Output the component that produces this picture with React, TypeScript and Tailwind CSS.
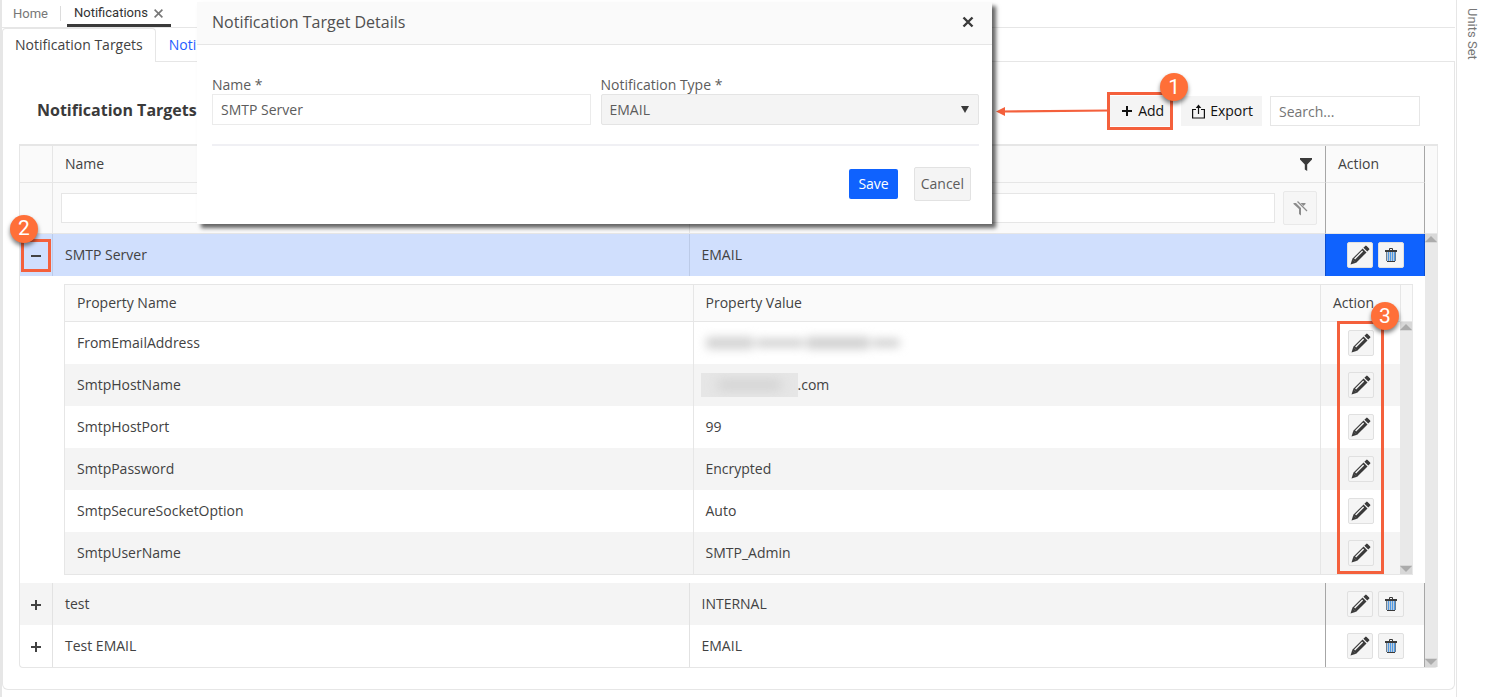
import React from "react";

type Target = { name: string; type: string };
type Property = { name: string; value: React.ReactNode };

const Redacted = () => (
  <span className="flex w-[196px] items-center gap-0.5 blur-[5px]">
    <span className="h-3 w-12 rounded bg-[#d2d2d2]" />
    <span className="h-2 w-12 rounded bg-[#cccccc]" />
    <span className="h-3 w-16 rounded bg-[#cfcfcf]" />
    <span className="h-2 w-7 rounded bg-[#cccccc]" />
  </span>
);

const RedactedHost = () => (
  <span className="-ml-[5px] flex items-center">
    <span className="flex h-6 w-[97px] items-center overflow-hidden bg-[#e6e6e6] px-4">
      <span className="h-2 w-full rounded bg-[#cccccc] blur-[6px]" />
    </span>
    .com
  </span>
);

const properties: Property[] = [
  { name: "FromEmailAddress", value: <Redacted /> },
  { name: "SmtpHostName", value: <RedactedHost /> },
  { name: "SmtpHostPort", value: "99" },
  { name: "SmtpPassword", value: "Encrypted" },
  { name: "SmtpSecureSocketOption", value: "Auto" },
  { name: "SmtpUserName", value: "SMTP_Admin" },
];

const otherTargets: Target[] = [
  { name: "test", type: "INTERNAL" },
  { name: "Test EMAIL", type: "EMAIL" },
];

const PencilIcon = () => (
  <svg width="20" height="20" viewBox="0 0 20 20" fill="#3a3a3a">
    <path d="M13.4 2.700 15.200.9q.7-.7 1.400 0l2.500 2.500q.7.700 0 1.400l-1.800 1.800z" />
    <path d="M12.600 3.500 16.500 7.400 6.200 17.700 .5 19.500 2.300 13.800z" />
    <path d="M12.600 6 4.600 14" stroke="#f4f4f4" strokeWidth="1.400" />
    <path d="M2.300 14.200 5.800 17.700" stroke="#777" strokeWidth=".5" />
  </svg>
);

const TrashIcon = () => (
  <svg width="12" height="14" viewBox="0 0 12 14" fill="none">
    <path d="M4.500 2V.5h3V2" stroke="#3a3a3a" />
    <path d="M0 2h12v2H0z" fill="#3a3a3a" />
    <path d="M1.500 4h9v9h-9z" fill="#c3cdd6" />
    <path d="M3.500 4v9M5.500 4v9M7.500 4v9M9.500 4v9" stroke="#4f9ae6" />
    <path d="M1.500 4v9M10.500 4v9" stroke="#6b7f92" />
    <path d="M2 13.500h8" stroke="#3a3a3a" />
  </svg>
);

const PlusIcon = () => (
  <svg width="10" height="10" viewBox="0 0 10 10" fill="currentColor">
    <path d="M4 0h2v4h4v2H6v4H4V6H0V4h4z" />
  </svg>
);

const MinusIcon = () => (
  <svg width="10" height="10" viewBox="0 0 10 10" fill="currentColor">
    <path d="M0 4h10v2H0z" />
  </svg>
);

const ExportIcon = () => (
  <svg width="13" height="15" viewBox="0 0 13 15" fill="none" stroke="#111" strokeWidth="1.200">
    <path d="M4 5.500H.6v8.500h11.800V5.500H9" />
    <path d="M6.500 10V2" />
    <path d="M6.500 .5 9.300 4H3.700z" fill="#111" stroke="none" />
  </svg>
);

const FunnelIcon = () => (
  <svg width="12" height="13" viewBox="0 0 12 13" fill="#3a3a3a">
    <path d="M0 0h12v1.500L7.200 6.500V13L4.800 11.500v-5L0 1.500z" />
  </svg>
);

const FunnelClearIcon = () => (
  <svg width="15" height="15" viewBox="0 0 15 15" fill="none">
    <path d="M.5 2H3l5 5v7.500L6 13V8L.5 3z" fill="#8c8c8c" />
    <path d="M7.500 2h5v1L10.500 5z" fill="#8c8c8c" />
    <path d="M4.500.5 14 10" stroke="#8c8c8c" strokeWidth="1.200" />
  </svg>
);

const ArrowUp = () => (
  <svg className="block" width="12" height="9" viewBox="0 0 12 9">
    <rect width="12" height="9" fill="#d8d8d8" />
    <path d="M0 8 6 2l6 6z" fill="#ababab" />
  </svg>
);

const ArrowDown = () => (
  <svg className="block" width="12" height="9" viewBox="0 0 12 9">
    <rect width="12" height="9" fill="#d8d8d8" />
    <path d="M0 1 6 7l6-6z" fill="#ababab" />
  </svg>
);

const IconButton = ({ label, children }: { label: string; children: React.ReactNode }) => (
  <button
    type="button"
    aria-label={label}
    className="flex size-[26px] items-center justify-center rounded-xs border border-[#e0e0e0] bg-[#f5f5f5]"
  >
    {children}
  </button>
);

const Badge = ({ n, className }: { n: number; className: string }) => (
  <span
    className={
      "absolute z-30 flex size-7 items-center justify-center rounded-full bg-[#ff6f38] font-[Roboto,sans-serif] text-[21px] leading-none text-white shadow-[0_3px_4px_rgba(0,0,0,0.5)] " +
      className
    }
  >
    {n}
  </span>
);

const Gutter = ({ headClass }: { headClass: string }) => (
  <div className="flex w-[13px] shrink-0 flex-col border-r border-[#e8e8e8] bg-[#e9e9e9]">
    <div className={"border-b border-[#e6e6e6] bg-[#fafafa] " + headClass} />
    <ArrowUp />
    <div className="flex-1" />
    <ArrowDown />
  </div>
);

const PropertyGrid = () => (
  <div className="relative flex border border-r-0 border-[#e6e6e6]">
    <table className="w-full flex-1 table-fixed border-separate border-spacing-0 text-left">
      <colgroup>
        <col />
        <col />
        <col className="w-20" />
      </colgroup>
      <thead className="bg-[#fafafa]">
        <tr>
          <th className="h-[37px] border-b border-[#e6e6e6] px-3 font-normal">Property Name</th>
          <th className="border-b border-l border-[#e6e6e6] px-3 font-normal">Property Value</th>
          <th className="border-b border-l border-[#e6e6e6] px-3 font-normal">Action</th>
        </tr>
      </thead>
      <tbody>
        {properties.map((p) => (
          <tr key={p.name} className="even:bg-[#f4f4f4]">
            <td className="h-[42px] px-3">{p.name}</td>
            <td className="border-l border-[#e6e6e6] px-3">{p.value}</td>
            <td className="border-l border-[#e6e6e6]">
              <div className="flex justify-center">
                <IconButton label={"Edit " + p.name}>
                  <PencilIcon />
                </IconButton>
              </div>
            </td>
          </tr>
        ))}
      </tbody>
    </table>
    <Gutter headClass="h-[37px] border-l" />
    <div className="pointer-events-none absolute top-9 right-[29px] bottom-0 w-[47px] border-3 border-[#f4603c]">
      <Badge n={3} className="-top-[22px] -right-[18px]" />
    </div>
  </div>
);

const TargetActions = ({ name }: { name: string }) => (
  <div className="flex justify-center gap-[5px]">
    <IconButton label={"Edit " + name}>
      <PencilIcon />
    </IconButton>
    <IconButton label={"Delete " + name}>
      <TrashIcon />
    </IconButton>
  </div>
);

const TargetGrid = () => (
  <div className="flex rounded-b-sm border border-t-2 border-r-0 border-[#e6e6e6]">
    <table className="w-full flex-1 table-fixed border-separate border-spacing-0 text-left">
      <colgroup>
        <col className="w-8" />
        <col />
        <col />
        <col className="w-[100px]" />
      </colgroup>
      <thead className="bg-[#fafafa]">
        <tr>
          <th className="h-[37px] border-b border-[#e6e6e6]" />
          <th className="border-b border-l border-[#e6e6e6] px-3 font-normal">Name</th>
          <th className="border-b border-l border-[#e6e6e6] px-[13px] font-normal">
            <button type="button" aria-label="Filter" className="ml-auto block">
              <FunnelIcon />
            </button>
          </th>
          <th className="border-x border-b border-x-[#a6a6a6] border-b-[#e6e6e6] px-3 font-normal">Action</th>
        </tr>
        <tr>
          <td className="h-[51px] border-b border-[#e6e6e6]" />
          <td className="border-b border-l border-[#e6e6e6] px-2">
            <input aria-label="Filter by name" className="block h-[30px] w-full border border-[#e6e6e6] bg-white px-2" />
          </td>
          <td className="border-b border-l border-[#e6e6e6] px-2">
            <div className="flex items-center gap-2">
              <input aria-label="Filter by type" className="h-[30px] min-w-0 flex-1 border border-[#e6e6e6] bg-white px-2" />
              <button
                type="button"
                aria-label="Clear filter"
                className="flex size-[34px] items-center justify-center rounded-xs border border-[#e9e9e9] bg-[#f6f6f6]"
              >
                <FunnelClearIcon />
              </button>
            </div>
          </td>
          <td className="border-x border-b border-x-[#a6a6a6] border-b-[#e6e6e6]" />
        </tr>
      </thead>
      <tbody>
        <tr className="bg-[#d0dffd]">
          <td className="h-[42px]">
            <div className="relative flex justify-center">
              <button type="button" aria-label="Collapse SMTP Server" className="pt-[9px] pb-2">
                <MinusIcon />
              </button>
              <div className="pointer-events-none absolute -top-[3px] left-px h-[33px] w-[30px] border-3 border-[#f4603c]">
                <Badge n={2} className="-top-[27px] -left-[14px]" />
              </div>
            </div>
          </td>
          <td className="border-l border-[#bccbe8] px-3">SMTP Server</td>
          <td className="border-l border-[#bccbe8] px-3">EMAIL</td>
          <td className="border-x border-[#0b4ed0] bg-[#0f62fe]">
            <TargetActions name="SMTP Server" />
          </td>
        </tr>
        <tr>
          <td colSpan={4} className="py-2 pr-3 pl-11">
            <PropertyGrid />
          </td>
        </tr>
        {otherTargets.map((t) => (
          <tr key={t.name} className="odd:bg-[#f4f4f4]">
            <td className="h-[42px]">
              <button type="button" aria-label={"Expand " + t.name} className="mx-auto block pt-0.5">
                <PlusIcon />
              </button>
            </td>
            <td className="border-l border-[#e2e2e2] px-3">{t.name}</td>
            <td className="border-l border-[#e2e2e2] px-3">{t.type}</td>
            <td className="border-x border-[#a6a6a6]">
              <TargetActions name={t.name} />
            </td>
          </tr>
        ))}
      </tbody>
    </table>
    <Gutter headClass="h-[88px]" />
  </div>
);

const DetailsDialog = () => (
  <section
    role="dialog"
    aria-labelledby="dialog-title"
    className="absolute top-0.5 left-[197px] z-20 w-[795px] bg-white text-[#5c5c5c] shadow-[4px_4px_4px_rgba(0,0,0,0.6)]"
  >
    <header className="flex h-[43px] items-center justify-between border-b border-[#e6e6e6] bg-[#fafafa] pr-[18px] pb-0.5 pl-[15px]">
      <h2 id="dialog-title" className="text-base text-[#505050]">
        Notification Target Details
      </h2>
      <button type="button" aria-label="Close">
        <svg className="block" width="12" height="12" viewBox="0 0 12 12" stroke="#3a3a3a" strokeWidth="2.400">
          <path d="M1.500 1.500l9 9M10.500 1.500l-9 9" />
        </svg>
      </button>
    </header>
    <form className="pt-[31px] pr-[13px] pl-[15px]" onSubmit={(e) => e.preventDefault()}>
      <div className="grid grid-cols-2 gap-[10px]">
        <div>
          <label htmlFor="target-name" className="block leading-[18px]">
            Name *
          </label>
          <input
            id="target-name"
            defaultValue="SMTP Server"
            className="block h-[31px] w-full border border-[#ebebeb] bg-white px-2"
          />
        </div>
        <div>
          <label htmlFor="target-type" className="block leading-[18px]">
            Notification Type *
          </label>
          <div className="relative">
            <select
              id="target-type"
              defaultValue="EMAIL"
              className="block h-[31px] w-full appearance-none rounded-xs border border-[#e4e4e4] bg-[#f4f4f4] px-2"
            >
              <option>EMAIL</option>
            </select>
            <svg className="pointer-events-none absolute top-3 right-[10px]" width="8" height="7" viewBox="0 0 8 7">
              <path d="M0 0h8L4 7z" fill="#3a3a3a" />
            </svg>
          </div>
        </div>
      </div>
      <div className="mt-[19px] flex items-center justify-end gap-4 border-t-2 border-[#f0f0f4] pt-[21px] pr-2 pb-[23px]">
        <button type="submit" className="h-[30px] rounded-xs bg-[#0f62fe] px-[9px] text-white">
          Save
        </button>
        <button type="button" className="h-[34px] rounded-xs border border-[#e2e2e2] bg-[#f4f4f4] px-1.5">
          Cancel
        </button>
      </div>
    </form>
  </section>
);

export default function App() {
  return (
    <div className="relative flex min-h-screen bg-white font-['Open_Sans',sans-serif] text-sm text-[#424242]">
      <main className="flex min-w-0 flex-1 flex-col border-r border-l-2 border-[#e6e6e6] pr-px pb-[7px]">
        <nav className="flex h-7 items-stretch border-b border-[#e6e6e6] font-[Roboto,sans-serif] text-[13px]">
          <a href="#home" className="flex items-center pr-[10px] pl-[11px] pt-px text-[#777777]">
            Home
          </a>
          <span className="my-1.5 ml-0.5 w-px bg-[#dcdcdc]" />
          <div className="ml-1.5 flex items-center gap-1.5 border-b-3 border-[#3a3a3a] pt-[3px] pr-2 pl-[7px] text-[#333333]">
            <a href="#notifications">Notifications</a>
            <button type="button" aria-label="Close tab">
              <svg className="block" width="9" height="9" viewBox="0 0 9 9" stroke="#777" strokeWidth="1.600">
                <path d="M.6.600l7.800 7.800M8.400.600.6 8.400" />
              </svg>
            </button>
          </div>
        </nav>
        <div className="flex h-[34px] text-[14px]">
          <a
            href="#targets"
            className="flex items-center rounded-t-sm border-t border-r border-l border-[#e6e6e6] px-3 pb-0.5"
          >
            Notification Targets
          </a>
          <div className="flex flex-1 items-center border-b border-[#e6e6e6] pl-[13px]">
            <a href="#noti" className="text-[#1f5cff]">
              Noti
            </a>
          </div>
        </div>
        <section className="flex-1 rounded-b-md border-x border-b border-[#e6e6e6] px-4 pb-[21px]">
          <div className="flex items-center px-[18px] pt-[34px] pb-[18px]">
            <h1 className="flex-1 text-base leading-7 font-bold text-[#3a3a3a] pb-0.5">Notification Targets</h1>
            <div className="relative mr-[11px]">
              <button type="button" className="flex h-[30px] items-center gap-1.5 bg-[#f4f4f4] pr-1.5 pl-3 text-[#111]">
                <PlusIcon />
                Add
              </button>
              <div className="pointer-events-none absolute -inset-x-[3px] -inset-y-1 border-3 border-[#f4603c]">
                <svg className="absolute top-2.5 right-full" width="116" height="12" viewBox="0 0 116 12">
                  <path d="M6 6.500 116 5.500" stroke="#f4603c" strokeWidth="2.200" />
                  <path d="M2 6.500 11 2v9z" fill="#f4603c" />
                </svg>
                <Badge n={1} className="-top-[22px] -right-[18px]" />
              </div>
            </div>
            <button type="button" className="mr-2 flex h-[30px] items-center gap-[5px] bg-[#f4f4f4] pr-[9px] pl-[11px] text-[#111]">
              <ExportIcon />
              Export
            </button>
            <input
              type="search"
              aria-label="Search"
              placeholder="Search..."
              className="h-[30px] w-[150px] border border-[#e6e6e6] px-2 placeholder:text-[#757575]"
            />
          </div>
          <TargetGrid />
        </section>
      </main>
      <aside className="w-7 shrink-0 pt-2 font-[Roboto,sans-serif] text-[13px] text-[#777777]">
        <button type="button" className="ml-[5px] [writing-mode:vertical-rl]">
          Units Set
        </button>
      </aside>
      <DetailsDialog />
    </div>
  );
}
